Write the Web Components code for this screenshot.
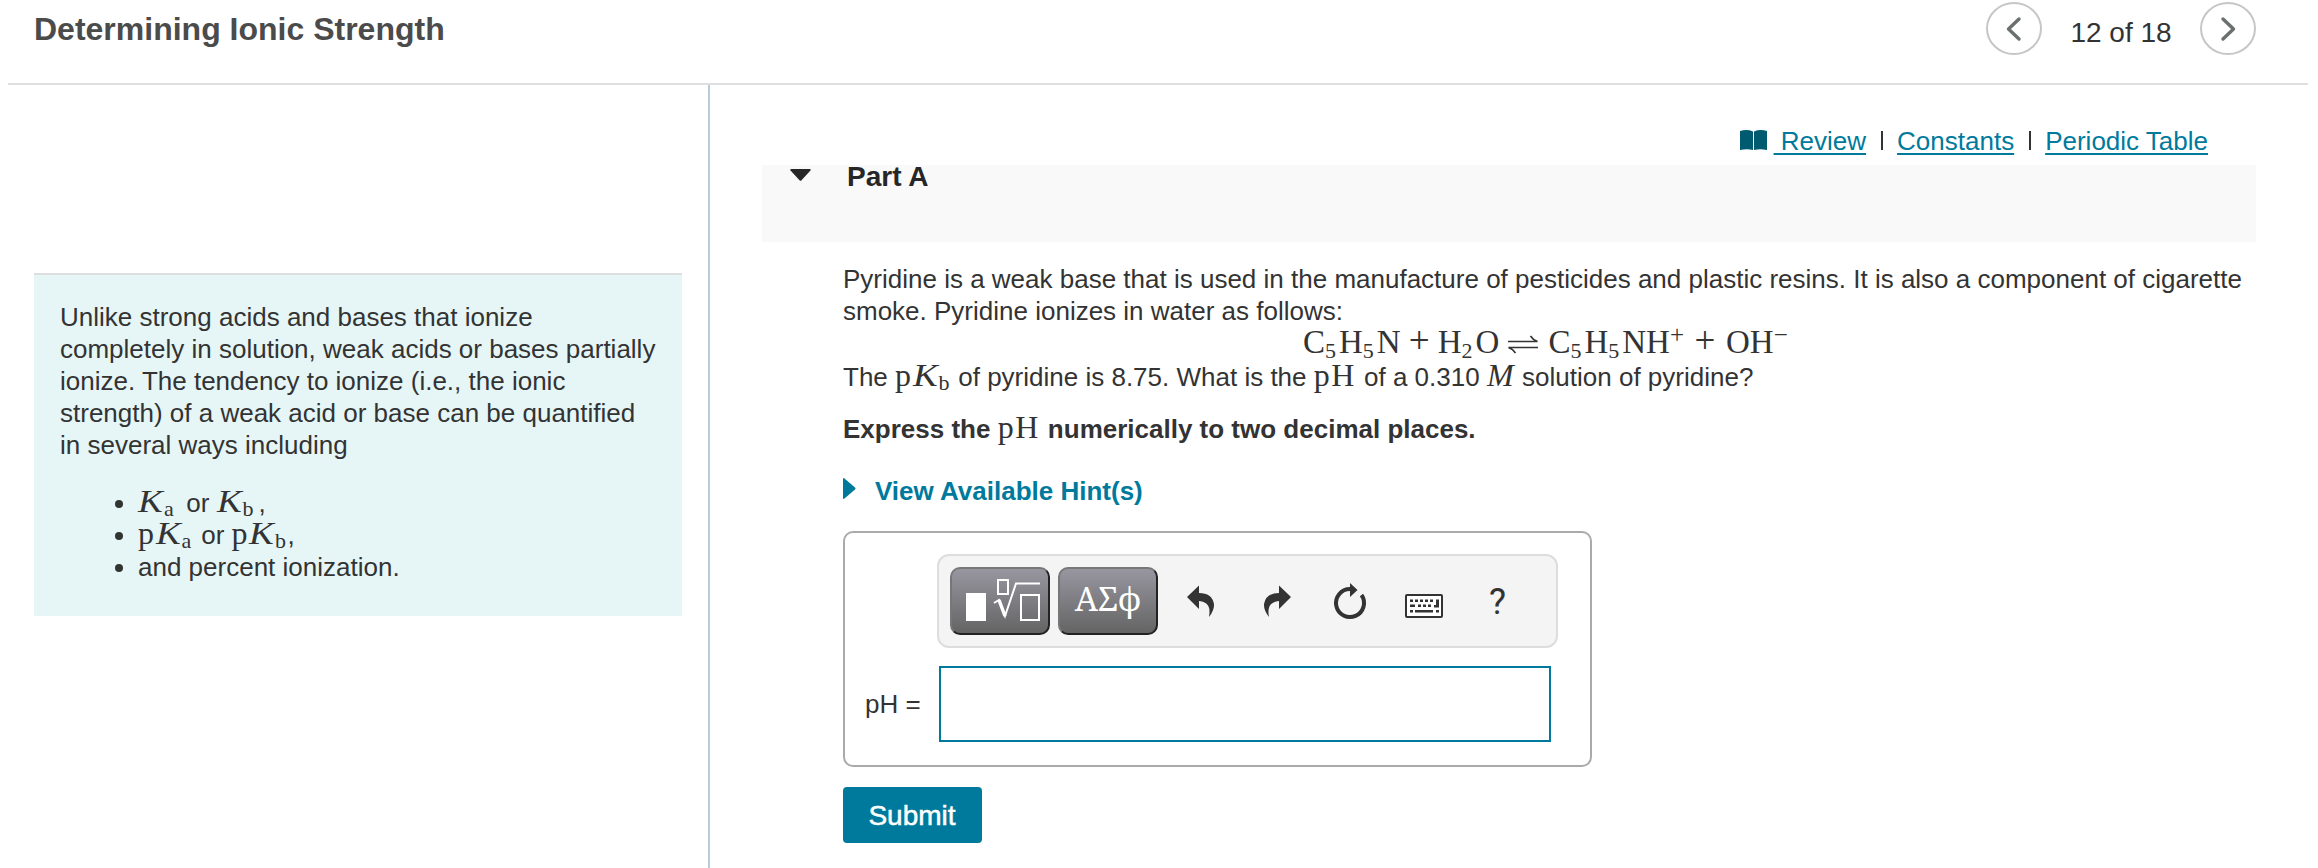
<!DOCTYPE html>
<html lang="en">
<head>
<meta charset="utf-8">
<title>Determining Ionic Strength</title>
<style>
    html, body { margin: 0; height: 868px; overflow: hidden; background: #fff; }
    body { font-family: "Liberation Sans", Arial, sans-serif; font-size: 26px; line-height: 32px; color: #333; }
    .line { height: 32px; white-space: nowrap; }
</style>
</head>
<body>
<assignment-page>
    <item-header slot="header" current="12" total="18">Determining Ionic Strength</item-header>
    <intro-panel slot="intro">
        Unlike strong acids and bases that ionize completely in solution, weak acids or bases partially ionize. The tendency to ionize (i.e., the ionic strength) of a weak acid or base can be quantified in several ways including
        <span slot="ways"><chem-math style="width:41px"><i>K</i><sub>a</sub></chem-math> or <chem-math style="width:42px"><i>K</i><sub>b</sub></chem-math>,</span>
        <span slot="ways"><chem-math style="width:56px">p<i>K</i><sub>a</sub></chem-math> or <chem-math style="width:56px">p<i>K</i><sub>b</sub></chem-math>,</span>
        <span slot="ways">and percent ionization.</span>
    </intro-panel>
    <resource-links slot="links"></resource-links>
    <part-section slot="part" heading="Part A">
        <div>Pyridine is a weak base that is used in the manufacture of pesticides and plastic resins. It is also a component of cigarette smoke. Pyridine ionizes in water as follows:</div>
        <reaction-line></reaction-line>
        <div class="line">The <chem-math style="width:56px">p<i>K</i><sub>b</sub></chem-math> of pyridine is 8.75. What is the <chem-math style="width:43px">pH</chem-math> of a 0.310 <chem-math style="width:28px"><em>M</em></chem-math> solution of pyridine?</div>
        <b slot="instruction">Express the <chem-math style="width:43px">pH</chem-math> numerically to two decimal places.</b>
        <answer-box slot="answer" label="pH ="></answer-box>
    </part-section>
</assignment-page>

<script>
class AssignmentPage extends HTMLElement {
    constructor() {
        super();
        this.attachShadow({ mode: "open" });
        this.shadowRoot.innerHTML = `
            <style>
                :host { display: flex; flex-direction: column; width: 2318px; height: 868px; }
                .columns { display: flex; flex: 1; }
                aside { box-sizing: border-box; width: 708px; padding: 188px 0 0 34px; }
                main { flex: 1; border-left: 2px solid #bccbd9; padding: 40px 62px 0 52px; }
            </style>
            <slot name="header"></slot>
            <div class="columns">
                <aside><slot name="intro"></slot></aside>
                <main><slot name="links"></slot><slot name="part"></slot></main>
            </div>
        `;
    }
}

class ItemHeader extends HTMLElement {
    constructor() {
        super();
        this.attachShadow({ mode: "open" });
    }

    connectedCallback() {
        this.shadowRoot.innerHTML = `
            <style>
                :host { display: flex; box-sizing: border-box; height: 85px; margin-left: 8px; margin-right: 10px;
                        padding: 0 52px 0 26px; border-bottom: 2px solid #dfdfdf; }
                h1 { flex: 1; margin: 11px 0 0; font-size: 32px; line-height: 36px; color: #4b4b4b; }
                nav { display: flex; }
                button { width: 56px; height: 53px; margin: 2px 0 0; padding: 0; background: #fff;
                         border: 2px solid #c6c6c6; border-radius: 50%; }
                svg { display: block; margin: auto; fill: none; stroke: #6a7070; stroke-width: 3.4;
                      stroke-linecap: round; stroke-linejoin: round; }
                span { width: 158px; text-align: center; font-size: 28px; padding-top: 17px; }
            </style>
            <h1><slot></slot></h1>
            <nav>
                <button><svg width="16" height="26"><path d="M13 3 2.500 13 13 23"/></svg></button>
                <span>${this.getAttribute("current")} of ${this.getAttribute("total")}</span>
                <button><svg width="16" height="26"><path d="M3 3 13.500 13 3 23"/></svg></button>
            </nav>
        `;
    }
}

class IntroPanel extends HTMLElement {
    constructor() {
        super();
        this.attachShadow({ mode: "open", slotAssignment: "manual" });
        this.shadowRoot.innerHTML = `
            <style>
                :host { display: block; box-sizing: border-box; width: 648px; height: 343px;
                        padding: 26px 26px 0; border-top: 2px solid #dedede; background: #e6f6f7; }
                ul { margin: 26px 0 0; padding: 0 0 0 78px; }
                li { height: 32px; }
            </style>
            <div><slot></slot></div>
            <ul></ul>
        `;
    }

    connectedCallback() {
        const list = this.shadowRoot.querySelector("ul");
        const ways = [...this.querySelectorAll("[slot=ways]")];
        this.shadowRoot.querySelector("slot").assign(...[...this.childNodes].filter(n => n.nodeType == 3 && n.data.trim()));
        for (const way of ways) {
            const item = document.createElement("li");
            const slot = document.createElement("slot");
            item.append(slot);
            list.append(item);
            slot.assign(way);
        }
    }
}

// Inline formula in an upright serif, wide variables in <i>, indices in <sub>
class ChemMath extends HTMLElement {
    constructor() {
        super();
        this.attachShadow({ mode: "open" });
        this.shadowRoot.innerHTML = `
            <style>
                :host { display: inline-block; font: 32px/24px "Liberation Serif", serif; letter-spacing: 1.5px; white-space: nowrap; }
                ::slotted(i) { display: inline-block; width: 26px; transform: scaleX(1.16); transform-origin: left; }
                ::slotted(sub) { font-size: 22px; line-height: 0; vertical-align: -4px; letter-spacing: 0; }
            </style>
            <slot></slot>
        `;
    }
}

class ReactionLine extends HTMLElement {
    constructor() {
        super();
        this.attachShadow({ mode: "open" });
        this.shadowRoot.innerHTML = `
            <style>
                :host { display: flex; height: 34px; padding-left: 460px; font: 33px/30px "Liberation Serif", serif; white-space: nowrap; }
                sub, sup { font-size: 22px; line-height: 0; }
                sub { vertical-align: -5px; margin-right: 3px; }
                sup { vertical-align: 10px; font-size: 25px; }
                b { display: inline-block; width: 37px; font-weight: normal; font-size: 37px; line-height: 24px; text-align: center; }
                svg { display: block; margin: 8px 10px 0 9px; fill: none; stroke: #333; stroke-width: 1.6; }
            </style>
            <span>C<sub>5</sub>H<sub>5</sub>N<b>+</b>H<sub>2</sub>O</span>
            <svg width="30" height="19"><path d="M0 6.500H29.500Q25 5 22.500 1M30 12.500H.5Q5 14 7.500 18"/></svg>
            <span>C<sub>5</sub>H<sub>5</sub>NH<sup>+</sup><b style="width:42px">+</b>OH<sup>−</sup></span>
        `;
    }
}

class ResourceLinks extends HTMLElement {
    constructor() {
        super();
        this.attachShadow({ mode: "open" });
        this.shadowRoot.innerHTML = `
            <style>
                :host { display: flex; justify-content: flex-end; height: 40px; padding-right: 48px; }
                a { color: #007a9c; text-decoration: underline; text-decoration-thickness: 2px; text-underline-offset: 3px; white-space: pre; }
                i { width: 2px; height: 19px; margin: 6px 14px 0 15px; background: #333; }
                svg { margin: 5px 7px 0 0; fill: #005a70; }
            </style>
            <svg width="27" height="21"><path d="M0 1Q7-1 13 1.500V20Q7 18.500 0 20ZM14 1.500Q20-1 27 1V20Q20 18.500 14 20Z"/></svg>
            <a> Review</a><i></i><a>Constants</a><i></i><a>Periodic Table</a>
        `;
    }
}

class PartSection extends HTMLElement {
    constructor() {
        super();
        this.attachShadow({ mode: "open" });
    }

    connectedCallback() {
        this.shadowRoot.innerHTML = `
            <style>
                :host { display: block; }
                header { display: flex; box-sizing: border-box; height: 77px; padding-left: 28px; background: #f9f9f9; }
                header svg { margin: 4px 36px 0 0; fill: #262626; }
                h2 { margin: -4px 0 0; font-size: 28px; line-height: 32px; color: #262626; }
                .body { padding: 21px 0 0 81px; }
                .instruction { margin-top: 20px; height: 32px; }
                .hints { display: flex; margin-top: 30px; height: 32px; font-weight: bold; color: #007a9c; }
                .hints svg { margin: 3px 19px 0 0; fill: #007a9c; }
            </style>
            <header>
                <svg width="21" height="12"><path d="M1 0H20Q21.500 1 20 2L11.500 11.300Q10.500 12.300 9.500 11.300L1 2Q-.5 1 1 0Z"/></svg>
                <h2>${this.getAttribute("heading")}</h2>
            </header>
            <div class="body">
                <slot></slot>
                <div class="instruction"><slot name="instruction"></slot></div>
                <div class="hints">
                    <svg width="13" height="21"><path d="M0 1Q0-.5 1.500.5L12 9.500Q13 10.500 12 11.500L1.500 20.500Q0 21.500 0 20Z"/></svg>
                    View Available Hint(s)
                </div>
                <slot name="answer"></slot>
            </div>
        `;
    }
}

class AnswerBox extends HTMLElement {
    constructor() {
        super();
        this.attachShadow({ mode: "open" });
    }

    connectedCallback() {
        this.shadowRoot.innerHTML = `
            <style>
                :host { display: block; margin-top: 24px; }
                .frame { box-sizing: border-box; width: 749px; height: 236px; padding: 21px 0 0 19px;
                         border: 2px solid #aaa; border-radius: 10px; }
                .toolbar { display: flex; box-sizing: border-box; width: 621px; height: 94px; margin-left: 73px;
                           padding: 11px 0 0 11px; background: #f4f4f4; border: 2px solid #ddd; border-radius: 12px; }
                .key { display: flex; align-items: center; justify-content: center; box-sizing: border-box;
                       width: 100px; height: 68px; margin-right: 8px; border: 2px solid #777;
                       border-right-color: #222; border-bottom-color: #222; border-radius: 10px;
                       background: linear-gradient(#9896a0, #646464); color: #fff; }
                .greek { font: 33px/40px "Noto Serif", "DejaVu Serif", serif; padding-bottom: 4px; }
                .tools { display: block; fill: #333; }
                .help { padding: 15px 0 0 9px; font: 36px/40px Roboto, sans-serif; }
                .row { display: flex; margin-top: 18px; }
                label { width: 74px; padding: 22px 0 0 1px; }
                input { box-sizing: border-box; width: 612px; height: 76px; border: 2px solid #007a9c; padding: 0 12px; outline: 0; font: inherit; }
                .submit { display: block; width: 139px; height: 56px; margin-top: 20px; padding: 1px 1px 0 0; border: 0; border-radius: 4px;
                          background: #007a9c; color: #fff; font: 28px/55px "Liberation Sans", sans-serif; -webkit-text-stroke: .5px #fff; }
            </style>
            <div class="frame">
                <div class="toolbar">
                    <div class="key">
                        <svg width="96" height="64" fill="none" stroke="#fff" stroke-width="2">
                            <path d="M14 24H34V52H14Z" fill="#fff" stroke="none"/>
                            <path d="M46 11H56V25H46ZM69 26H87V51H69Z"/>
                            <path d="M42 34 47 31 53 47 64 14.500H88"/>
                            <path d="M47 31 53 47" stroke-width="3.500"/>
                        </svg>
                    </div>
                    <div class="key greek">ΑΣϕ</div>
                    <svg class="tools" width="314" height="68">
                        <path d="M21 30 33 18.500V26Q46 26 48 37 48.500 43 43 50 46 35 33 34V42Z"/>
                        <path d="M125 30 113 18.500V26Q100 26 98 37 97.500 43 103 50 100 35 113 34V42Z"/>
                        <path d="M184 22A14 14 0 1 0 195.500 28" fill="none" stroke="#333" stroke-width="4"/>
                        <path d="M184 16 191.500 23 184 30Z"/>
                        <rect x="240" y="28" width="36" height="22" rx="1" fill="#fff" stroke="#333" stroke-width="2"/>
                        <path d="M244 32.500h3v2.500h-3zM249 32.500h3v2.500h-3zM254 32.500h3v2.500h-3zM259 32.500h3v2.500h-3zM264 32.500h3v2.500h-3z
                                 M270 32.500h3v8h-5v-2.500h2zM244 37.500h5v2.500h-5zM252 37.500h3v2.500h-3zM257 37.500h3v2.500h-3zM262 37.500h3v2.500h-3z
                                 M244 43h3v2.500h-3zM249 43h18v2.500h-18zM270 43h3v2.500h-3z"/>
                    </svg>
                    <span class="help">?</span>
                </div>
                <div class="row"><label>${this.getAttribute("label")}</label><input></div>
            </div>
            <button class="submit">Submit</button>
        `;
    }
}

customElements.define("assignment-page", AssignmentPage);
customElements.define("item-header", ItemHeader);
customElements.define("intro-panel", IntroPanel);
customElements.define("chem-math", ChemMath);
customElements.define("reaction-line", ReactionLine);
customElements.define("resource-links", ResourceLinks);
customElements.define("part-section", PartSection);
customElements.define("answer-box", AnswerBox);
</script>
</body>
</html>
